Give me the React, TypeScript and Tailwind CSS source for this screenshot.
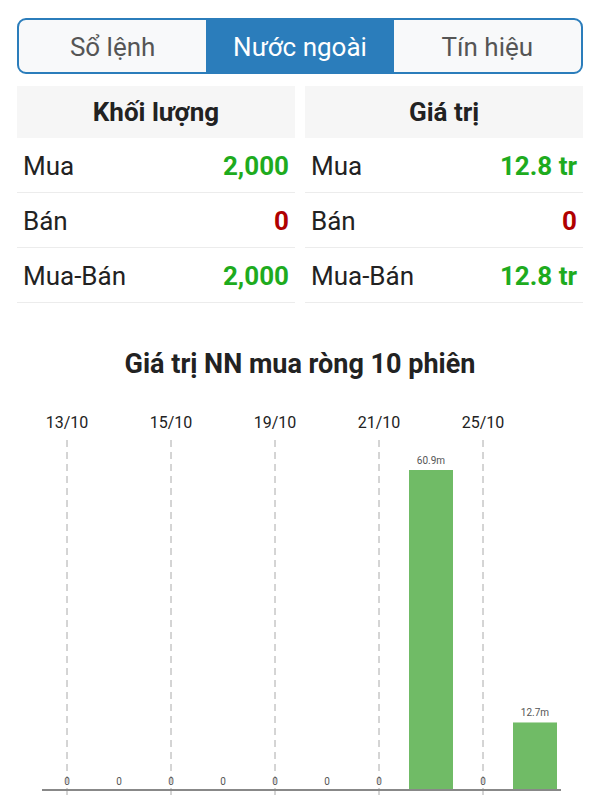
import React from 'react';

const tabs = ['Sổ lệnh', 'Nước ngoài', 'Tín hiệu'];

interface StatRow {
  label: string;
  value: string;
  up: boolean;
}

const volumeRows: StatRow[] = [
  { label: 'Mua', value: '2,000', up: true },
  { label: 'Bán', value: '0', up: false },
  { label: 'Mua-Bán', value: '2,000', up: true },
];

const valueRows: StatRow[] = [
  { label: 'Mua', value: '12.8 tr', up: true },
  { label: 'Bán', value: '0', up: false },
  { label: 'Mua-Bán', value: '12.8 tr', up: true },
];

// 10 sessions, value in millions
const sessions = [0, 0, 0, 0, 0, 0, 0, 60.9, 0, 12.7];
const dates = ['13/10', '15/10', '19/10', '21/10', '25/10'];

const StatColumn: React.FC<{ title: string; rows: StatRow[] }> = ({ title, rows }) => (
  <div className="flex flex-col">
    <div className="h-[52px] bg-[#f6f6f6] flex items-center justify-center text-[26px] font-bold text-[#222]">
      {title}
    </div>
    {rows.map((r) => (
      <div key={r.label} className="h-[55px] flex items-center justify-between px-[6px] pt-[3px] border-b border-[#ececec]">
        <span className="text-[26px] text-[#222]">{r.label}</span>
        <span className={`text-[26px] font-bold ${r.up ? 'text-[#1eab1e]' : 'text-[#b00000]'}`}>{r.value}</span>
      </div>
    ))}
  </div>
);

const Chart: React.FC = () => {
  const left = 41;
  const slot = 52;
  const baseY = 395;
  const maxH = 319;
  const maxV = 60.9;
  return (
    <svg width="600" height="405" viewBox="0 0 600 405" className="block">
      {dates.map((d, i) => {
        const x = left + slot / 2 + i * 2 * slot;
        return (
          <g key={d}>
            <text x={x} y={34} textAnchor="middle" fontSize="16" fill="#222" fontFamily="Roboto, sans-serif">
              {d}
            </text>
            <line x1={x} y1={46} x2={x} y2={405} stroke="#aaa" strokeWidth="1" strokeDasharray="7 5" />
          </g>
        );
      })}
      {sessions.map((v, i) => {
        const cx = left + slot / 2 + i * slot;
        if (v === 0) {
          return (
            <text key={i} x={cx} y={391} textAnchor="middle" fontSize="10" fill="#555" fontFamily="Roboto, sans-serif">
              0
            </text>
          );
        }
        const h = (v / maxV) * maxH;
        return (
          <g key={i}>
            <rect x={cx - 22} y={baseY - h} width="44" height={h} fill="#70bb66" />
            <text x={cx} y={baseY - h - 6} textAnchor="middle" fontSize="10" fill="#555" fontFamily="Roboto, sans-serif">
              {v.toFixed(1)}m
            </text>
          </g>
        );
      })}
      <line x1={42} y1={396} x2={561} y2={396} stroke="#888" strokeWidth="2" />
    </svg>
  );
};

export default function App() {
  return (
    <div className="w-[600px] h-[800px] overflow-hidden bg-white font-['Roboto',sans-serif]">
      <div className="pt-[18px] px-[17px]">
        <div className="h-[56px] flex border-2 border-[#2b7dbb] rounded-[9px] overflow-hidden bg-[#f8f9fa]">
          {tabs.map((t, i) => (
            <div
              key={t}
              className={`flex-1 flex items-center justify-center pt-[3px] text-[26px] ${
                i === 1 ? 'bg-[#2b7dbb] text-white' : 'text-[#555]'
              }`}
            >
              {t}
            </div>
          ))}
        </div>
        <div className="mt-[12px] grid grid-cols-2 gap-[10px]">
          <StatColumn title="Khối lượng" rows={volumeRows} />
          <StatColumn title="Giá trị" rows={valueRows} />
        </div>
        <div className="mt-[46px] h-[30px] flex items-center justify-center text-[27px] font-bold text-[#222]">
          Giá trị NN mua ròng 10 phiên
        </div>
      </div>
      <div className="mt-[15px]">
        <Chart />
      </div>
    </div>
  );
}
